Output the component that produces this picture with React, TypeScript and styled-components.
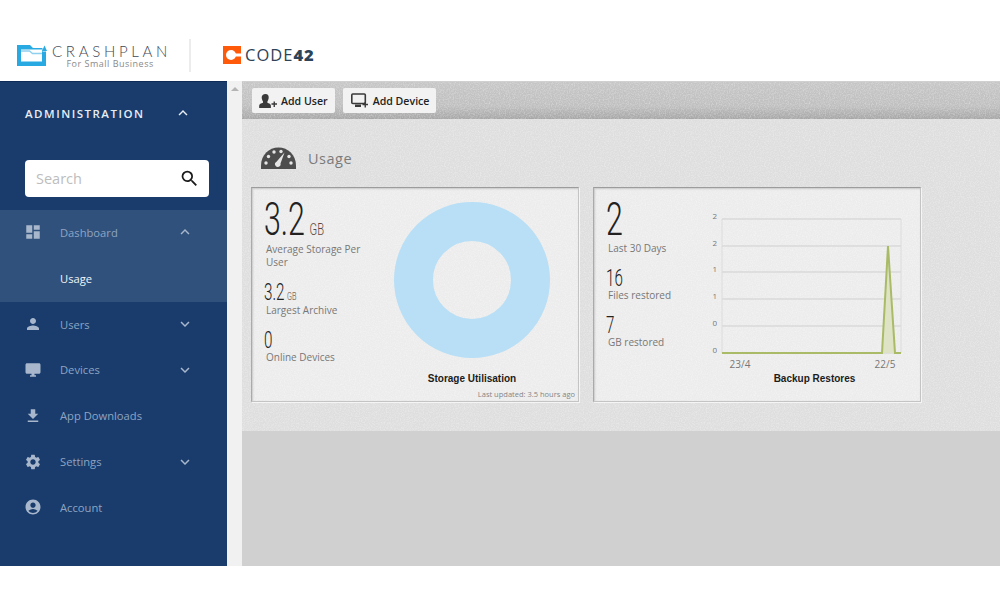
import React from 'react';
import styled, { createGlobalStyle } from 'styled-components';
import {
  MdDashboard,
  MdPerson,
  MdDesktopWindows,
  MdFileDownload,
  MdSettings,
  MdAccountCircle,
  MdKeyboardArrowUp,
  MdKeyboardArrowDown,
  MdSearch,
} from 'react-icons/md';

const noise = `url("data:image/svg+xml,%3Csvg xmlns='http://www.w3.org/2000/svg' width='160' height='160'%3E%3Cfilter id='n'%3E%3CfeTurbulence type='fractalNoise' baseFrequency='0.8' numOctaves='2' stitchTiles='stitch'/%3E%3CfeColorMatrix values='0 0 0 0 1 0 0 0 0 1 0 0 0 0 1 0 0 0 0.7 -0.27'/%3E%3C/filter%3E%3Crect width='160' height='160' filter='url(%23n)'/%3E%3C/svg%3E")`;

const GlobalStyle = createGlobalStyle`
  html, body {
    margin: 0;
    background: #fff;
    font-family: "Open Sans", "Liberation Sans", sans-serif;
  }
`;

const Page = styled.div`
  width: 1000px;
  height: 600px;
  overflow: hidden;
  background: #fff;
`;

const Header = styled.header`
  height: 81px;
  display: flex;
  align-items: center;
  padding: 30px 0 0 17px;
  box-sizing: border-box;
`;

const CrashPlanLogo = styled.div`
  display: flex;
  align-items: center;
  gap: 5px;
  width: 172px;
`;

const LogoWords = styled.div`
  display: flex;
  flex-direction: column;
  align-items: center;
  margin-top: 2px;
`;

const LogoName = styled.div`
  font-family: "Lato", sans-serif;
  font-weight: 300;
  font-size: 15px;
  line-height: 14px;
  letter-spacing: 3.7px;
  color: #3f4853;
  margin-right: -3px;
`;

const LogoTag = styled.div`
  font-size: 9px;
  line-height: 11px;
  letter-spacing: 0.5px;
  color: #8a8a8a;
`;

const HeaderRule = styled.div`
  width: 2px;
  height: 33px;
  background: #ececec;
  margin-right: 32px;
`;

const Code42Logo = styled.div`
  display: flex;
  align-items: center;
  gap: 4px;
  margin-top: -1px;
`;

const Code42Name = styled.div`
  font-family: "Open Sans", sans-serif;
  font-size: 16.5px;
  line-height: 18px;
  letter-spacing: 1px;
  color: #2d4357;
  b {
    font-weight: 800;
  }
`;

const Body = styled.div`
  height: 485px;
  display: flex;
`;

const Sidebar = styled.nav`
  width: 227px;
  flex: none;
  background: #193c6c;
  border-top: 1px solid #0e2b57;
  box-sizing: border-box;
  display: flex;
  flex-direction: column;
`;

const AdminRow = styled.div`
  height: 62px;
  padding: 0 35px 0 25px;
  margin-bottom: 16px;
  display: flex;
  align-items: center;
  justify-content: space-between;
  color: #e8edf4;
  font-size: 11.5px;
  font-weight: 600;
  letter-spacing: 1.5px;
  svg {
    font-size: 18px;
  }
`;

const SearchBox = styled.div`
  width: 184px;
  height: 37px;
  margin-left: 25px;
  margin-bottom: 13px;
  box-sizing: border-box;
  padding: 0 9px 0 11px;
  background: #fff;
  border-radius: 4px;
  display: flex;
  align-items: center;
  justify-content: space-between;
  color: #bdbdbd;
  font-size: 14.5px;
  line-height: 34px;
  svg {
    font-size: 21px;
    color: #1b1b1b;
  }
`;

const NavGroup = styled.div`
  background: #30517b;
`;

const NavRow = styled.div`
  height: 45.8px;
  padding: 0 33px 1px 24px;
  box-sizing: border-box;
  display: flex;
  align-items: center;
  color: #8ea4c3;
  font-size: 11.2px;
  svg {
    color: #a8b7cc;
    font-size: 18px;
    flex: none;
  }
`;

const NavLabel = styled.span`
  margin-left: 18px;
  flex: 1;
`;

const SubRow = styled.div`
  height: 46px;
  padding: 0 0 1px 60px;
  box-sizing: border-box;
  display: flex;
  align-items: center;
  color: #f2f5f9;
  font-size: 11.2px;
`;

const ScrollStrip = styled.div`
  width: 15px;
  flex: none;
  background: #f1f1f1;
  display: flex;
  justify-content: center;
  padding-top: 6px;
  box-sizing: border-box;
`;

const ScrollArrow = styled.div`
  width: 0;
  height: 0;
  border-left: 4px solid transparent;
  border-right: 4px solid transparent;
  border-bottom: 4px solid #b4b4b4;
`;

const Main = styled.main`
  flex: 1;
  background: #d0d0d0;
  display: flex;
  flex-direction: column;
  padding-top: 1px;
`;

const Toolbar = styled.div`
  height: 37px;
  box-sizing: border-box;
  padding: 6px 0 0 10px;
  display: flex;
  gap: 8px;
  background: ${noise}, linear-gradient(#c6c6c6, #bfbfbf 65%, #a6a6a6);
`;

const ToolButton = styled.button`
  height: 25px;
  padding: 0 7px;
  border: 0;
  border-radius: 2px;
  background: #f2f2f2;
  display: flex;
  align-items: center;
  gap: 4px;
  font-family: "Open Sans", sans-serif;
  font-size: 10.6px;
  font-weight: 600;
  color: #222;
`;

const Content = styled.section`
  height: 312px;
  box-sizing: border-box;
  background: ${noise}, #dedede;
  padding: 27px 0 0 9px;
`;

const TitleRow = styled.div`
  display: flex;
  align-items: center;
  gap: 12px;
  height: 24px;
  padding-left: 10px;
  margin-bottom: 17px;
`;

const Title = styled.h1`
  margin: 0;
  font-size: 14.5px;
  font-weight: 400;
  letter-spacing: 0.5px;
  color: #7b7b7b;
`;

const Cards = styled.div`
  display: flex;
  gap: 14px;
`;

const Card = styled.article`
  width: 328px;
  height: 215px;
  box-sizing: border-box;
  background: ${noise}, #ececec;
  border: 1px solid #c4c4c4;
  border-top-color: #9c9c9c;
  border-left-color: #aaa;
  box-shadow: inset 1px 1px 2px rgba(0, 0, 0, 0.16), 1px 1px 0 #f5f5f5;
  display: flex;
  padding: 11px 0 0 12px;
`;

const Stats = styled.div`
  flex: none;
  display: flex;
  flex-direction: column;
  align-items: flex-start;
`;

const Figure = styled.div<{ $size: 'large' | 'small' }>`
  font-family: "Roboto", sans-serif;
  font-weight: 300;
  color: #222;
  transform: scaleX(0.66);
  transform-origin: left center;
  white-space: nowrap;
  font-size: ${(p) => (p.$size === 'large' ? 46 : 23)}px;
  line-height: ${(p) => (p.$size === 'large' ? 40 : 22)}px;
`;

const Unit = styled.span<{ $size: 'large' | 'small' }>`
  color: #5c4a40;
  line-height: 0;
  font-size: ${(p) => (p.$size === 'large' ? 17 : 11)}px;
  margin-left: ${(p) => (p.$size === 'large' ? 7 : 4)}px;
`;

const StatLabel = styled.div<{ $top: number; $bottom: number }>`
  font-size: 10px;
  line-height: 13px;
  color: #777;
  margin: ${(p) => p.$top}px 0 ${(p) => p.$bottom}px 2px;
  width: 100px;
`;

const Caption = styled.div`
  font-family: "Liberation Sans", sans-serif;
  font-size: 10px;
  font-weight: 700;
  line-height: 14px;
  color: #1c1c1c;
  text-align: center;
`;

const DonutColumn = styled.div`
  flex: 1;
  display: flex;
  flex-direction: column;
  align-items: center;
  padding-top: 2px;
`;

const DonutCaption = styled(Caption)`
  margin-top: 13px;
`;

const Updated = styled.div`
  font-size: 7.5px;
  line-height: 10px;
  color: #858585;
  align-self: flex-end;
  margin: 3px 3px 0 0;
`;

const ChartColumn = styled.div`
  flex: none;
  width: 212px;
  margin-top: 9px;
  display: flex;
  flex-direction: column;
`;

const ChartCaption = styled(Caption)`
  width: 179px;
  margin-left: 17px;
`;

const Crashplan = () => (
  <svg width="30" height="21" viewBox="0 0 30 21">
    <path d="M0 0H13L16 3H25.500V6.500H29V21H0Z" fill="#29a9e1" />
    <path d="M4 4.500H25V16.500H4Z" fill="#fff" />
    <path d="M4 6H12.500L15.500 8.500H25" fill="none" stroke="#8fd0f0" strokeWidth="1.300" />
    <path d="M27.500 .5 30 6H25Z" fill="#29a9e1" />
    <path d="M25 7H26V21H25Z" fill="#29a9e1" />
  </svg>
);

const Code42 = () => (
  <svg width="18" height="18" viewBox="0 0 18 18">
    <rect width="18" height="18" fill="#ff5a0a" />
    <circle cx="8" cy="9" r="5" fill="#fff" />
    <rect x="8" y="7.500" width="10" height="3" fill="#fff" />
  </svg>
);

const AddUserIcon = () => (
  <svg width="18" height="14" viewBox="0 0 18 14">
    <path d="M6.500 0c2.300 0 3.400 1.700 3.200 3.800-.1 1.500-.7 2.800-1.300 3.600v1.400c1.500.5 2.800 1.100 3.300 2 .3.700.2 2 .2 3.200H.2c0-1.200-.1-2.500.2-3.200.5-.9 1.800-1.500 3.600-2V7.400C3.400 6.600 2.800 5.300 2.700 3.800 2.500 1.700 4.200 0 6.500 0z" fill="#3a3a3a" />
    <path d="M12.500 10h5.500M15.250 7.500V13" stroke="#3a3a3a" strokeWidth="1.400" />
  </svg>
);

const AddDeviceIcon = () => (
  <svg width="19" height="15" viewBox="0 0 19 15">
    <rect x="1.800" y="1" width="13.500" height="9.500" rx="1" fill="none" stroke="#3a3a3a" strokeWidth="1.600" />
    <path d="M5 11.500h6V14H5z" fill="#3a3a3a" />
    <path d="M12.500 11.500H18M15.250 9v5.500" stroke="#3a3a3a" strokeWidth="1.400" />
  </svg>
);

const Gauge = () => (
  <svg width="35" height="22" viewBox="0 0 35 22">
    <path d="M0 22v-3.500C0 8 8 .5 17.500.5S35 8 35 18.500V22z" fill="#4d4d4d" />
    <g fill="#e6e6e6">
      <circle cx="5" cy="16" r="1.700" />
      <circle cx="7.500" cy="9.500" r="1.700" />
      <circle cx="13" cy="5" r="1.700" />
      <circle cx="20" cy="4.500" r="1.700" />
      <circle cx="30" cy="16" r="1.700" />
      <circle cx="28" cy="9.500" r="1.700" />
    </g>
    <path d="M23.500 5.500 19.500 16.500a2.800 2.800 0 1 1-4-1.800z" fill="#e6e6e6" />
  </svg>
);

const Donut = () => (
  <svg width="156" height="158" viewBox="0 0 156 158">
    <circle cx="78" cy="79" r="58.500" fill="none" stroke="#b8dff6" strokeWidth="39" />
  </svg>
);

const gridY = [11, 38, 64, 91, 118, 145];
const axisLabels = ['2', '2', '1', '1', '0', '0'];

const RestoresChart = () => (
  <svg width="212" height="164" viewBox="0 0 212 164">
    {gridY.map((y, i) => (
      <g key={y}>
        <line x1="14" x2="193" y1={y} y2={y} stroke="#cfcfcf" strokeWidth="1" />
        <text x="9" y={y} textAnchor="end" fontFamily="Open Sans" fontSize="8" fill="#777">
          {axisLabels[i]}
        </text>
      </g>
    ))}
    <line x1="14" x2="14" y1="11" y2="145" stroke="#dcdcdc" />
    <line x1="193" x2="193" y1="11" y2="145" stroke="#dcdcdc" />
    <path d="M174 145 180 38 187 145z" fill="#dde3c4" />
    <path d="M14 145H174L180 38 187 145H193" fill="none" stroke="#a9bb66" strokeWidth="2" />
    <text x="32" y="160" textAnchor="middle" fontFamily="Open Sans" fontSize="10" fill="#777">23/4</text>
    <text x="177" y="160" textAnchor="middle" fontFamily="Open Sans" fontSize="10" fill="#777">22/5</text>
  </svg>
);

const App: React.FC = () => (
  <Page>
    <GlobalStyle />
    <Header>
      <CrashPlanLogo>
        <Crashplan />
        <LogoWords>
          <LogoName>CRASHPLAN</LogoName>
          <LogoTag>For Small Business</LogoTag>
        </LogoWords>
      </CrashPlanLogo>
      <HeaderRule />
      <Code42Logo>
        <Code42 />
        <Code42Name>CODE<b>42</b></Code42Name>
      </Code42Logo>
    </Header>
    <Body>
      <Sidebar>
        <AdminRow>
          ADMINISTRATION
          <MdKeyboardArrowUp />
        </AdminRow>
        <SearchBox>
          Search
          <MdSearch />
        </SearchBox>
        <NavGroup>
          <NavRow>
            <MdDashboard />
            <NavLabel>Dashboard</NavLabel>
            <MdKeyboardArrowUp />
          </NavRow>
          <SubRow>Usage</SubRow>
        </NavGroup>
        <NavRow>
          <MdPerson />
          <NavLabel>Users</NavLabel>
          <MdKeyboardArrowDown />
        </NavRow>
        <NavRow>
          <MdDesktopWindows />
          <NavLabel>Devices</NavLabel>
          <MdKeyboardArrowDown />
        </NavRow>
        <NavRow>
          <MdFileDownload />
          <NavLabel>App Downloads</NavLabel>
        </NavRow>
        <NavRow>
          <MdSettings />
          <NavLabel>Settings</NavLabel>
          <MdKeyboardArrowDown />
        </NavRow>
        <NavRow>
          <MdAccountCircle />
          <NavLabel>Account</NavLabel>
        </NavRow>
      </Sidebar>
      <ScrollStrip>
        <ScrollArrow />
      </ScrollStrip>
      <Main>
        <Toolbar>
          <ToolButton>
            <AddUserIcon />
            Add User
          </ToolButton>
          <ToolButton>
            <AddDeviceIcon />
            Add Device
          </ToolButton>
        </Toolbar>
        <Content>
          <TitleRow>
            <Gauge />
            <Title>Usage</Title>
          </TitleRow>
          <Cards>
            <Card>
              <Stats>
                <Figure $size="large">3.2<Unit $size="large">GB</Unit></Figure>
                <StatLabel $top={4} $bottom={13}>Average Storage Per User</StatLabel>
                <Figure $size="small">3.2<Unit $size="small">GB</Unit></Figure>
                <StatLabel $top={0} $bottom={13}>Largest Archive</StatLabel>
                <Figure $size="small">0</Figure>
                <StatLabel $top={-1} $bottom={0}>Online Devices</StatLabel>
              </Stats>
              <DonutColumn>
                <Donut />
                <DonutCaption>Storage Utilisation</DonutCaption>
                <Updated>Last updated: 3.5 hours ago</Updated>
              </DonutColumn>
            </Card>
            <Card>
              <Stats>
                <Figure $size="large">2</Figure>
                <StatLabel $top={3} $bottom={13}>Last 30 Days</StatLabel>
                <Figure $size="small">16</Figure>
                <StatLabel $top={-1} $bottom={13}>Files restored</StatLabel>
                <Figure $size="small">7</Figure>
                <StatLabel $top={-1} $bottom={0}>GB restored</StatLabel>
              </Stats>
              <ChartColumn>
                <RestoresChart />
                <ChartCaption>Backup Restores</ChartCaption>
              </ChartColumn>
            </Card>
          </Cards>
        </Content>
      </Main>
    </Body>
  </Page>
);

export default App;
